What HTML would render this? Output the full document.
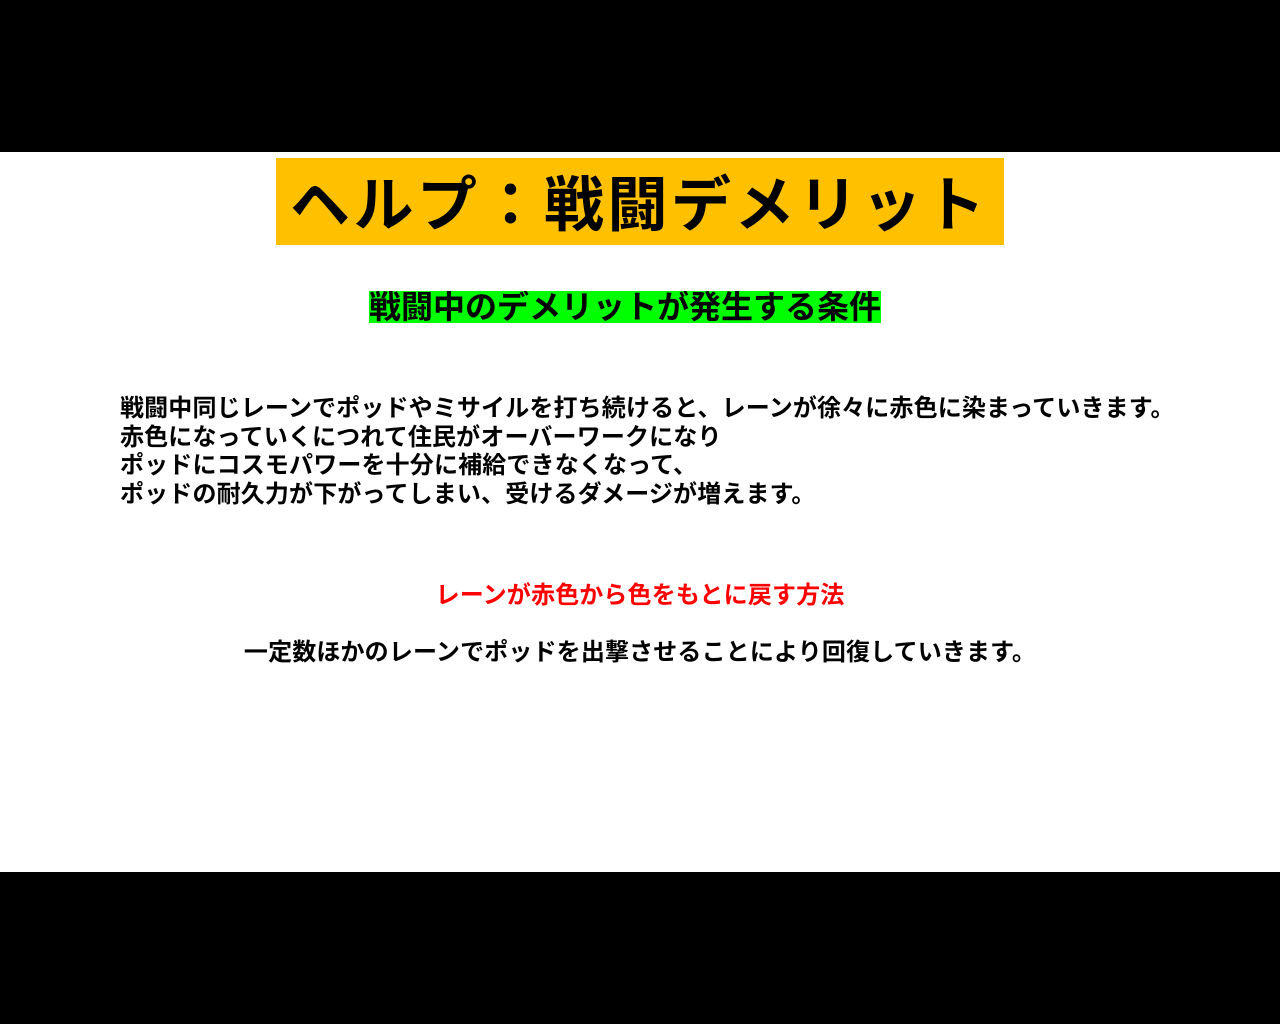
<!DOCTYPE html>
<html><head><meta charset="utf-8"><style>
body{margin:0;width:1280px;height:1024px;background:#000;position:relative;overflow:hidden;font-family:"Liberation Sans","Noto Sans CJK JP",sans-serif;font-weight:bold;color:#000}
.w{position:absolute;left:0;top:152px;width:1280px;height:720px;background:#fff}
.t{position:absolute;left:276px;top:158px;width:728px;height:87px;background:#ffc000;font-size:60px;line-height:95px;white-space:nowrap;letter-spacing:3.5px;text-indent:14px;overflow:hidden}
.g{position:absolute;left:369px;top:291px;width:512px;height:32px;background:#00ff00;font-size:32px;line-height:32px;letter-spacing:0;white-space:nowrap;overflow:hidden}
.b{position:absolute;left:120px;top:395px;font-size:24px;line-height:28.5px;white-space:nowrap;letter-spacing:0.15px}
.c{position:absolute;left:0;width:1280px;text-align:center;font-size:24px;white-space:nowrap;letter-spacing:0.15px}
</style></head><body>
<div class="w"></div>
<div class="t">ヘルプ：戦闘デメリット</div>
<div class="g">戦闘中のデメリットが発生する条件</div>
<div class="b">戦闘中同じレーンでポッドやミサイルを打ち続けると、レーンが徐々に赤色に染まっていきます。<br>赤色になっていくにつれて住民がオーバーワークになり<br>ポッドにコスモパワーを十分に補給できなくなって、<br>ポッドの耐久力が下がってしまい、受けるダメージが増えます。</div>
<div class="c" style="top:575px;color:#ff0000">レーンが赤色から色をもとに戻す方法</div>
<div class="c" style="top:632px">一定数ほかのレーンでポッドを出撃させることにより回復していきます。</div>
</body></html>
